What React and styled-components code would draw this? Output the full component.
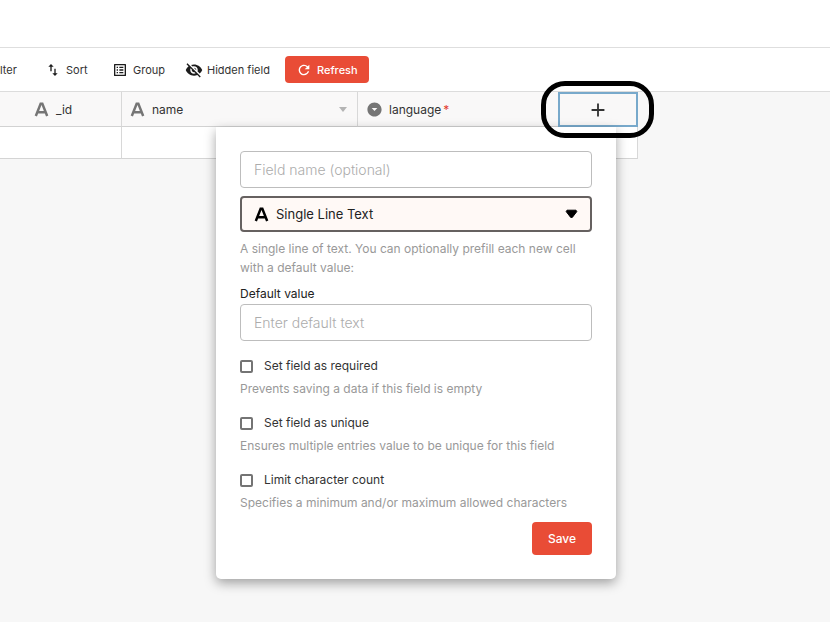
import React from "react";
import styled, { createGlobalStyle } from "styled-components";
import {
  MdSwapVert,
  MdOutlineListAlt,
  MdVisibilityOff,
  MdRefresh,
  MdArrowDropDownCircle,
  MdAdd,
} from "react-icons/md";

const GlobalStyle = createGlobalStyle`
  *, *::before, *::after { box-sizing: border-box; }
  body {
    margin: 0;
    background: #f7f7f7;
    color: #333;
    font-family: Inter, "Open Sans", sans-serif;
    font-size: 12px;
    overflow-x: hidden;
  }
  button, input, select { font: inherit; color: inherit; }
`;

const Page = styled.div`
  min-height: 100vh;
`;

const TopBar = styled.header`
  height: 48px;
  background: #fff;
  border-bottom: 1px solid #dedede;
`;

const Toolbar = styled.nav`
  display: grid;
  grid-template-columns: 45px 67px 73px 100px auto;
  justify-content: start;
  align-items: center;
  height: 44px;
  background: #fff;
  border-bottom: 1px solid #dcdcdc;
`;

const ToolButton = styled.button`
  display: flex;
  align-items: center;
  gap: ${(p) => p.$gap || 5}px;
  padding: 0;
  border: 0;
  background: none;
  font-size: 11px;
  line-height: 16px;
  white-space: nowrap;
  cursor: pointer;
  svg {
    flex: none;
    color: #1c1c1c;
  }
`;

const PrimaryButton = styled.button`
  display: flex;
  align-items: center;
  justify-content: center;
  gap: 5px;
  height: ${(p) => (p.$large ? 33 : 27)}px;
  padding: 0 ${(p) => (p.$large ? 16 : 11)}px;
  border: 0;
  border-radius: 4px;
  background: #e94c36;
  color: #fff;
  font-size: ${(p) => (p.$large ? 12 : 11)}px;
  font-weight: 500;
  cursor: pointer;
`;

const Grid = styled.table`
  table-layout: fixed;
  width: 638px;
  border-collapse: separate;
  border-spacing: 0;
`;

const HeadCell = styled.th`
  position: relative;
  height: 35px;
  padding: 0;
  background: #f9f8f8;
  border-bottom: 1px solid #d2d2d2;
  border-right: ${(p) => (p.$open ? "0" : "1px solid #d8d8d8")};
  font-weight: 400;
`;

const HeadContent = styled.div`
  display: flex;
  align-items: center;
  gap: ${(p) => p.$gap || 7}px;
  padding: 0 10px 0 ${(p) => p.$indent || 8}px;
  svg {
    flex: none;
    color: #757575;
  }
`;

const Caret = styled.span`
  margin-left: auto;
  border: 4px solid transparent;
  border-top: 5px solid #b4b4b4;
  border-bottom: 0;
`;

const Required = styled.span`
  margin-left: 2px;
  color: #e23b2e;
`;

const Cell = styled.td`
  height: 32px;
  padding: 0;
  background: #fff;
  border-bottom: 1px solid #d4d4d4;
  border-right: ${(p) => (p.$open ? "0" : "1px solid #d8d8d8")};
`;

const AddButton = styled.button`
  display: flex;
  align-items: center;
  justify-content: center;
  width: 100%;
  height: 35px;
  margin-bottom: -1px;
  padding: 0;
  border: 2px solid #78a9cb;
  background: #f9f8f8;
  color: #333;
  cursor: pointer;
`;

const Highlight = styled.span`
  position: absolute;
  z-index: 3;
  inset: -11px -16px -12px -17px;
  border: 5px solid #000;
  border-radius: 24px;
  pointer-events: none;
`;

const Popover = styled.form`
  position: absolute;
  z-index: 2;
  top: 35px;
  right: 22px;
  width: 400px;
  padding: 24px;
  border-radius: 0 0 5px 5px;
  background: #fff;
  box-shadow: 0 4px 12px rgba(0, 0, 0, 0.36);
  text-align: left;
`;

const TextField = styled.input`
  display: block;
  width: 100%;
  height: 37px;
  padding: 0 13px;
  border: 1px solid #bdbdbd;
  border-radius: 4px;
  background: #fff;
  font-size: 14px;
  font-weight: 300;
  outline: 0;
  &::placeholder {
    color: #acacac;
    opacity: 1;
  }
`;

const SelectBox = styled.div`
  display: grid;
  align-items: center;
  margin: 8px 0 7px;
  > * {
    grid-area: 1 / 1;
  }
  svg {
    z-index: 1;
    color: #000;
    pointer-events: none;
  }
  > svg:first-child {
    margin-left: 14px;
  }
  > svg:last-child {
    justify-self: end;
    margin-right: 14px;
  }
`;

const TypeSelect = styled.select`
  appearance: none;
  width: 100%;
  height: 36px;
  padding: 0 34px;
  border: 2px solid #666160;
  border-radius: 4px;
  background: #fff9f6;
  color: #222;
  font-size: 13px;
  outline: 0;
`;

const Hint = styled.p`
  margin: 0;
  color: #999;
  line-height: 19px;
`;

const FieldLabel = styled.label`
  display: block;
  margin-top: 7px;
  color: #222;
  line-height: 20px;
`;

const Options = styled.div`
  display: grid;
  gap: 15px;
  margin: 15px 0 10px;
`;

const OptionLabel = styled.label`
  display: flex;
  align-items: center;
  gap: 11px;
  margin-bottom: 4px;
  line-height: 19px;
`;

const Checkbox = styled.input`
  appearance: none;
  width: 13px;
  height: 13px;
  margin: 1px 0 0;
  border: 2px solid #747474;
  border-radius: 2px;
  background: #fff;
  &:checked {
    background: #747474;
  }
`;

const Actions = styled.div`
  display: flex;
  justify-content: flex-end;
`;

const TextTypeIcon = () => (
  <svg width="15" height="15" viewBox="0 0 14 14" fill="none" stroke="currentColor" strokeWidth="2.3" aria-hidden="true">
    <path d="M1.7 13 6.2 1.7h1.6L12.3 13M3.6 9.5h6.8" />
  </svg>
);

const SelectArrow = () => (
  <svg width="13" height="10" viewBox="0 0 13 10" aria-hidden="true">
    <path d="M2 1.2h9l.8 1.4L7.3 8.4H5.7L1.2 2.6z" fill="currentColor" stroke="currentColor" strokeLinejoin="round" />
  </svg>
);

const OPTIONS = [
  ["required", "Set field as required", "Prevents saving a data if this field is empty"],
  ["unique", "Set field as unique", "Ensures multiple entries value to be unique for this field"],
  ["limit", "Limit character count", "Specifies a minimum and/or maximum allowed characters"],
];

function FieldPopover() {
  return (
    <Popover onSubmit={(e) => e.preventDefault()}>
      <TextField aria-label="Field name" placeholder="Field name (optional)" />
      <SelectBox>
        <TextTypeIcon />
        <TypeSelect aria-label="Field type">
          <option>Single Line Text</option>
        </TypeSelect>
        <SelectArrow />
      </SelectBox>
      <Hint>A single line of text. You can optionally prefill each new cell with a default value:</Hint>
      <FieldLabel htmlFor="default-value">Default value</FieldLabel>
      <TextField id="default-value" placeholder="Enter default text" />
      <Options>
        {OPTIONS.map(([id, label, hint]) => (
          <div key={id}>
            <OptionLabel htmlFor={id}>
              <Checkbox id={id} type="checkbox" />
              {label}
            </OptionLabel>
            <Hint>{hint}</Hint>
          </div>
        ))}
      </Options>
      <Actions>
        <PrimaryButton type="submit" $large>Save</PrimaryButton>
      </Actions>
    </Popover>
  );
}

export default function App() {
  return (
    <Page>
      <GlobalStyle />
      <TopBar />
      <Toolbar>
        <ToolButton>lter</ToolButton>
        <ToolButton><MdSwapVert size={16} />Sort</ToolButton>
        <ToolButton><MdOutlineListAlt size={16} />Group</ToolButton>
        <ToolButton $gap={4}><MdVisibilityOff size={18} />Hidden field</ToolButton>
        <PrimaryButton><MdRefresh size={16} />Refresh</PrimaryButton>
      </Toolbar>
      <Grid>
        <colgroup>
          <col width="122" />
          <col width="236" />
          <col width="200" />
          <col width="80" />
        </colgroup>
        <thead>
          <tr>
            <HeadCell><HeadContent $indent={34}><TextTypeIcon />_id</HeadContent></HeadCell>
            <HeadCell><HeadContent><TextTypeIcon />name<Caret /></HeadContent></HeadCell>
            <HeadCell $open>
              <HeadContent $gap={6}>
                <MdArrowDropDownCircle size={17} />
                <span>language<Required>*</Required></span>
              </HeadContent>
            </HeadCell>
            <HeadCell $open>
              <AddButton aria-label="Add field"><MdAdd size={22} /></AddButton>
              <Highlight />
              <FieldPopover />
            </HeadCell>
          </tr>
        </thead>
        <tbody>
          <tr>
            <Cell />
            <Cell />
            <Cell $open />
            <Cell />
          </tr>
        </tbody>
      </Grid>
    </Page>
  );
}
